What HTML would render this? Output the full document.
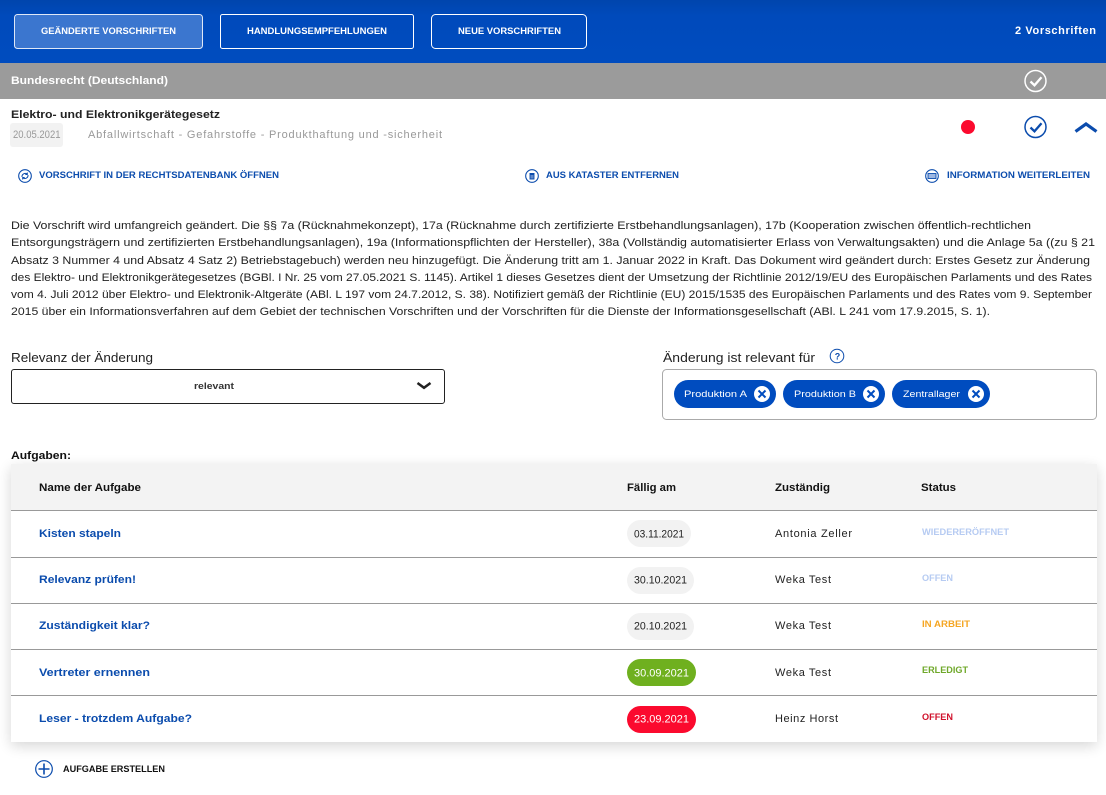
<!DOCTYPE html>
<html lang="de">
<head>
<meta charset="utf-8">
<title>Vorschriften</title>
<style>
html,body{margin:0;padding:0;background:#fff;width:1106px;height:795px;overflow:hidden}
svg{display:block;position:absolute;left:0;top:0}
text{font-family:"Liberation Sans",sans-serif;white-space:pre}
.b{font-weight:700}
.lk{fill:#0b4cad;font-weight:700;font-size:9.5px}
.bt{fill:#fff;font-weight:700;font-size:9.5px}
.body{fill:#222;font-size:11px}
.nm{fill:#0b4cad;font-weight:700;font-size:11px}
.p{fill:#222;font-size:11px}
.d{font-size:11px;fill:#222}
.st{font-weight:700;font-size:9.5px}
.th{fill:#111;font-weight:700;font-size:11px}
.chip{fill:#fff;font-size:9.5px}
</style>
</head>
<body>
<svg width="1106" height="795" viewBox="0 0 1106 795" xmlns="http://www.w3.org/2000/svg">
<defs>
<linearGradient id="hg" x1="0" y1="0" x2="0" y2="1"><stop offset="0" stop-color="#0045ad"/><stop offset=".25" stop-color="#004abb"/><stop offset="1" stop-color="#004cbf"/></linearGradient>
<filter id="sh" x="-5%" y="-10%" width="110%" height="120%"><feGaussianBlur stdDeviation="7"/></filter>
</defs>
<rect width="1106" height="63" fill="url(#hg)"/>
<rect x="14.5" y="14.5" width="188" height="34" rx="3" fill="#3b76cf" stroke="#dfe8f7"/>
<rect x="220.5" y="14.5" width="193" height="34" rx="2" fill="none" stroke="#fff"/>
<rect x="431.5" y="14.5" width="155" height="34" rx="4" fill="none" stroke="#fff"/>
<text class="bt" x="41" y="34" textLength="135" lengthAdjust="spacingAndGlyphs">GEÄNDERTE VORSCHRIFTEN</text>
<text class="bt" x="247" y="34" textLength="140" lengthAdjust="spacingAndGlyphs">HANDLUNGSEMPFEHLUNGEN</text>
<text class="bt" x="458" y="34" textLength="103" lengthAdjust="spacingAndGlyphs">NEUE VORSCHRIFTEN</text>
<text class="b" x="1015" y="34" font-size="11" fill="#fff" textLength="81" lengthAdjust="spacing">2 Vorschriften</text>

<rect y="63" width="1106" height="36" fill="#9b9b9b"/>
<text class="b" x="11" y="84" font-size="11" fill="#fff" textLength="157" lengthAdjust="spacingAndGlyphs">Bundesrecht (Deutschland)</text>
<circle cx="1035.500" cy="81" r="10.500" fill="none" stroke="#fff" stroke-width="1.500"/>
<path d="M1030.500 81.500l4 3.800 7-8" fill="none" stroke="#fff" stroke-width="2.300"/>

<text class="b" x="11" y="118" font-size="11" fill="#222" textLength="209" lengthAdjust="spacingAndGlyphs">Elektro- und Elektronikgerätegesetz</text>
<rect x="10" y="123" width="53" height="24" rx="3" fill="#f2f2f2"/>
<text x="13" y="138" font-size="11" fill="#999" textLength="47.500" lengthAdjust="spacingAndGlyphs">20.05.2021</text>
<text x="88" y="138" font-size="11" fill="#999" textLength="354" lengthAdjust="spacing">Abfallwirtschaft - Gefahrstoffe - Produkthaftung und -sicherheit</text>
<circle cx="968" cy="127" r="7" fill="#fb0a2e"/>
<circle cx="1035.500" cy="127" r="10.500" fill="none" stroke="#0b4cad" stroke-width="1.500"/>
<path d="M1030.500 127.500l4 3.800 7-8" fill="none" stroke="#0b4cad" stroke-width="2.300"/>
<path d="M1075.500 131.500l10.500-7.500 10.500 7.500" fill="none" stroke="#0b4cad" stroke-width="3.200"/>

<circle cx="25" cy="176" r="6.300" fill="none" stroke="#0b4cad" stroke-width="1.100"/>
<path d="M22 177a3.200 3.200 0 0 1 5-3M28 175a3.200 3.200 0 0 1-5 3M27.300 172.500v2h-2M22.700 179.500v-2h2" fill="none" stroke="#0b4cad" stroke-width="1"/>
<text class="lk" x="39" y="178" textLength="240" lengthAdjust="spacingAndGlyphs">VORSCHRIFT IN DER RECHTSDATENBANK ÖFFNEN</text>
<circle cx="532" cy="176" r="6.300" fill="none" stroke="#0b4cad" stroke-width="1.100"/>
<path d="M529.500 173.500h5M530 174.500h4v4.500h-4z" fill="#5f87c9" stroke="#0b4cad" stroke-width=".9"/>
<text class="lk" x="546" y="178" textLength="133" lengthAdjust="spacingAndGlyphs">AUS KATASTER ENTFERNEN</text>
<circle cx="932" cy="176" r="6.300" fill="none" stroke="#0b4cad" stroke-width="1.100"/>
<rect x="928" y="173.500" width="8" height="5" fill="#9db7e2" stroke="#0b4cad" stroke-width=".9"/>
<text class="lk" x="947" y="178" textLength="143" lengthAdjust="spacingAndGlyphs">INFORMATION WEITERLEITEN</text>

<text class="body" x="11" y="229" textLength="1020" lengthAdjust="spacingAndGlyphs">Die Vorschrift wird umfangreich geändert. Die §§ 7a (Rücknahmekonzept), 17a (Rücknahme durch zertifizierte Erstbehandlungsanlagen), 17b (Kooperation zwischen öffentlich-rechtlichen</text>
<text class="body" x="11" y="246" textLength="1084" lengthAdjust="spacingAndGlyphs">Entsorgungsträgern und zertifizierten Erstbehandlungsanlagen), 19a (Informationspflichten der Hersteller), 38a (Vollständig automatisierter Erlass von Verwaltungsakten) und die Anlage 5a ((zu § 21</text>
<text class="body" x="11" y="264" textLength="1079" lengthAdjust="spacingAndGlyphs">Absatz 3 Nummer 4 und Absatz 4 Satz 2) Betriebstagebuch) werden neu hinzugefügt. Die Änderung tritt am 1. Januar 2022 in Kraft. Das Dokument wird geändert durch: Erstes Gesetz zur Änderung</text>
<text class="body" x="11" y="281" textLength="1081" lengthAdjust="spacingAndGlyphs">des Elektro- und Elektronikgerätegesetzes (BGBl. I Nr. 25 vom 27.05.2021 S. 1145). Artikel 1 dieses Gesetzes dient der Umsetzung der Richtlinie 2012/19/EU des Europäischen Parlaments und des Rates</text>
<text class="body" x="11" y="298" textLength="1081" lengthAdjust="spacingAndGlyphs">vom 4. Juli 2012 über Elektro- und Elektronik-Altgeräte (ABl. L 197 vom 24.7.2012, S. 38). Notifiziert gemäß der Richtlinie (EU) 2015/1535 des Europäischen Parlaments und des Rates vom 9. September</text>
<text class="body" x="11" y="315" textLength="979" lengthAdjust="spacingAndGlyphs">2015 über ein Informationsverfahren auf dem Gebiet der technischen Vorschriften und der Vorschriften für die Dienste der Informationsgesellschaft (ABl. L 241 vom 17.9.2015, S. 1).</text>

<text x="11" y="362" font-size="13" fill="#222" textLength="142" lengthAdjust="spacingAndGlyphs">Relevanz der Änderung</text>
<rect x="11.500" y="369.500" width="433" height="34" rx="2.500" fill="#fff" stroke="#222"/>
<text class="b" x="194" y="389" font-size="9.500" fill="#333" textLength="40" lengthAdjust="spacingAndGlyphs">relevant</text>
<path d="M417.500 383l6.500 4.800 6.500-4.800" fill="none" stroke="#222" stroke-width="2.500"/>

<text x="663" y="362" font-size="13" fill="#222" textLength="152" lengthAdjust="spacingAndGlyphs">Änderung ist relevant für</text>
<circle cx="837" cy="356" r="6.800" fill="none" stroke="#0b4cad" stroke-width="1"/>
<text x="834.700" y="359.500" font-size="9" font-weight="700" fill="#0b4cad">?</text>
<rect x="662.500" y="369.500" width="434" height="50" rx="4" fill="#fff" stroke="#aaa"/>
<rect x="674" y="380" width="102" height="28" rx="14" fill="#004cbf"/>
<rect x="783" y="380" width="102" height="28" rx="14" fill="#004cbf"/>
<rect x="892" y="380" width="98" height="28" rx="14" fill="#004cbf"/>
<text class="chip" x="684" y="397" textLength="63" lengthAdjust="spacingAndGlyphs">Produktion A</text>
<text class="chip" x="794" y="397" textLength="62" lengthAdjust="spacingAndGlyphs">Produktion B</text>
<text class="chip" x="903" y="397" textLength="57" lengthAdjust="spacingAndGlyphs">Zentrallager</text>
<circle cx="762" cy="394" r="8" fill="#fff"/><path d="M758.500 390.500l7 7m0-7l-7 7" stroke="#004cbf" stroke-width="2"/>
<circle cx="871" cy="394" r="8" fill="#fff"/><path d="M867.500 390.500l7 7m0-7l-7 7" stroke="#004cbf" stroke-width="2"/>
<circle cx="976" cy="394" r="8" fill="#fff"/><path d="M972.500 390.500l7 7m0-7l-7 7" stroke="#004cbf" stroke-width="2"/>

<text class="b" x="11" y="459" font-size="11" fill="#111" textLength="60" lengthAdjust="spacingAndGlyphs">Aufgaben:</text>
<rect x="11" y="468" width="1086" height="278" fill="#000" opacity=".16" filter="url(#sh)"/>
<rect x="11" y="464" width="1086" height="278" fill="#fff"/>
<rect x="11" y="464" width="1086" height="46" fill="#f3f3f3"/>
<rect x="11" y="510" width="1086" height="1" fill="#999"/>
<rect x="11" y="557" width="1086" height="1" fill="#999"/>
<rect x="11" y="603" width="1086" height="1" fill="#999"/>
<rect x="11" y="649" width="1086" height="1" fill="#999"/>
<rect x="11" y="695" width="1086" height="1" fill="#999"/>

<text class="th" x="39" y="491" textLength="102" lengthAdjust="spacingAndGlyphs">Name der Aufgabe</text>
<text class="th" x="627" y="491" textLength="49" lengthAdjust="spacingAndGlyphs">Fällig am</text>
<text class="th" x="775" y="491" textLength="55" lengthAdjust="spacingAndGlyphs">Zuständig</text>
<text class="th" x="921" y="491" textLength="35" lengthAdjust="spacingAndGlyphs">Status</text>

<text class="nm" x="39" y="537" textLength="82" lengthAdjust="spacingAndGlyphs">Kisten stapeln</text>
<text class="nm" x="39" y="583" textLength="97" lengthAdjust="spacingAndGlyphs">Relevanz prüfen!</text>
<text class="nm" x="39" y="629" textLength="111" lengthAdjust="spacingAndGlyphs">Zuständigkeit klar?</text>
<text class="nm" x="39" y="676" textLength="111" lengthAdjust="spacingAndGlyphs">Vertreter ernennen</text>
<text class="nm" x="39" y="722" textLength="153" lengthAdjust="spacingAndGlyphs">Leser - trotzdem Aufgabe?</text>

<rect x="627" y="520" width="64" height="27" rx="13.500" fill="#f2f2f2"/>
<rect x="627" y="567" width="67" height="27" rx="13.500" fill="#f2f2f2"/>
<rect x="627" y="613" width="67" height="27" rx="13.500" fill="#f2f2f2"/>
<rect x="627" y="659" width="69" height="27" rx="13.500" fill="#6fb01f"/>
<rect x="627" y="706" width="69" height="27" rx="13.500" fill="#fb0a2e"/>
<text class="d" x="634" y="537.500" textLength="50" lengthAdjust="spacingAndGlyphs">03.11.2021</text>
<text class="d" x="634" y="583.500" textLength="53" lengthAdjust="spacingAndGlyphs">30.10.2021</text>
<text class="d" x="634" y="629.500" textLength="53" lengthAdjust="spacingAndGlyphs">20.10.2021</text>
<text class="d" x="634" y="676.500" style="fill:#fff" textLength="55" lengthAdjust="spacingAndGlyphs">30.09.2021</text>
<text class="d" x="634" y="722.500" style="fill:#fff" textLength="55" lengthAdjust="spacingAndGlyphs">23.09.2021</text>

<text class="p" x="775" y="537" textLength="77" lengthAdjust="spacing">Antonia Zeller</text>
<text class="p" x="775" y="583" textLength="56" lengthAdjust="spacing">Weka Test</text>
<text class="p" x="775" y="629" textLength="56" lengthAdjust="spacing">Weka Test</text>
<text class="p" x="775" y="676" textLength="56" lengthAdjust="spacing">Weka Test</text>
<text class="p" x="775" y="722" textLength="63" lengthAdjust="spacing">Heinz Horst</text>

<text class="st" x="922" y="535" fill="#b6cbf2" textLength="87" lengthAdjust="spacingAndGlyphs">WIEDERERÖFFNET</text>
<text class="st" x="922" y="581" fill="#b6cbf2" textLength="31" lengthAdjust="spacingAndGlyphs">OFFEN</text>
<text class="st" x="922" y="627" fill="#f5a623" textLength="48" lengthAdjust="spacingAndGlyphs">IN ARBEIT</text>
<text class="st" x="922" y="673" fill="#6fa82a" textLength="46" lengthAdjust="spacingAndGlyphs">ERLEDIGT</text>
<text class="st" x="922" y="720" fill="#d0112b" textLength="31" lengthAdjust="spacingAndGlyphs">OFFEN</text>

<circle cx="44" cy="769" r="8.300" fill="none" stroke="#0b4cad" stroke-width="1.200"/>
<path d="M38.500 769h11M44 763.500v11" stroke="#0b4cad" stroke-width="1.600"/>
<text class="b" x="63" y="772" font-size="9.500" fill="#111" textLength="102" lengthAdjust="spacingAndGlyphs">AUFGABE ERSTELLEN</text>
</svg>
</body>
</html>
